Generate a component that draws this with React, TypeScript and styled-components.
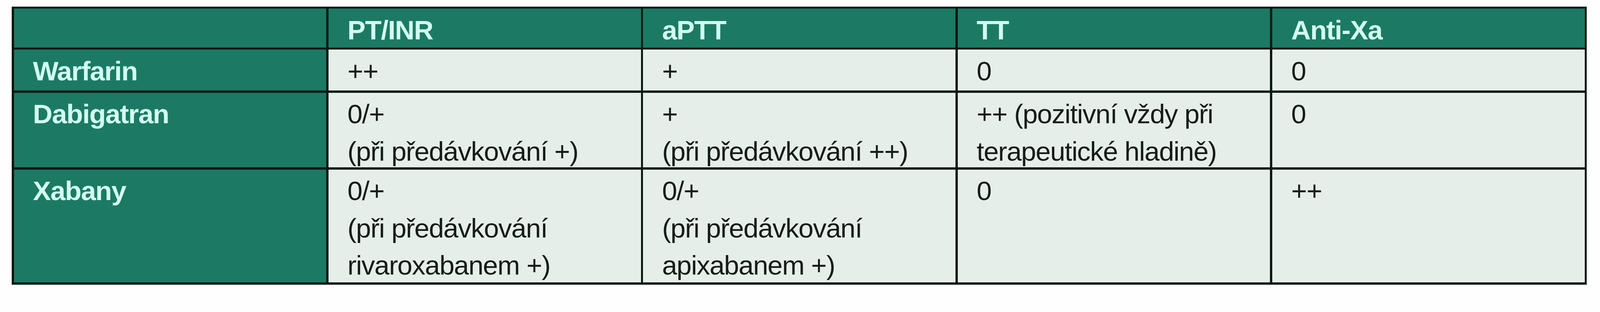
import React from 'react';
import styled, {createGlobalStyle} from 'styled-components';

// The capture is 4372px wide; sizes are given in those pixels and scaled to the real viewport width.
const px = (n: number) => `calc(${n} * 100vw / 4372)`;

const GlobalStyle = createGlobalStyle`
  html, body {
    margin: 0;
    padding: 0;
    background: #fdfefd;
    overflow: hidden;
  }
  body {
    font-family: "Liberation Sans", Arial, sans-serif;
  }
`;

const Page = styled.div`
  padding: ${px(18)} 0 0 ${px(32)};
`;

// The grid's own background shows through the gaps as the cell rules.
const Grid = styled.div`
  display: grid;
  width: ${px(4304)};
  box-sizing: border-box;
  grid-template-columns: repeat(5, minmax(0, 1fr));
  grid-template-rows: ${px(106)} ${px(112)} ${px(204)} ${px(309)};
  gap: ${px(6)};
  padding: ${px(6)};
  background: #0b1914;
`;

const Cell = styled.div<{$head?: boolean}>`
  box-sizing: border-box;
  padding: ${px(8)} ${px(30)} 0 ${px(52)};
  font-size: ${px(74)};
  line-height: ${px(102)};
  letter-spacing: ${px(-1.5)};
  background: ${({$head}) => ($head ? '#1c7a64' : '#e6eee9')};
  color: ${({$head}) => ($head ? '#d2fdf1' : '#161c19')};
  font-weight: ${({$head}) => ($head ? 700 : 400)};
  overflow: hidden;
`;

const Line = styled.div`
  white-space: nowrap;
`;

const columns = ['PT/INR', 'aPTT', 'TT', 'Anti-Xa'];

const rows: {drug: string; values: string[][]}[] = [
  {drug: 'Warfarin', values: [['++'], ['+'], ['0'], ['0']]},
  {
    drug: 'Dabigatran',
    values: [
      ['0/+', '(při předávkování +)'],
      ['+', '(při předávkování ++)'],
      ['++ (pozitivní vždy při', 'terapeutické hladině)'],
      ['0'],
    ],
  },
  {
    drug: 'Xabany',
    values: [
      ['0/+', '(při předávkování', 'rivaroxabanem +)'],
      ['0/+', '(při předávkování', 'apixabanem +)'],
      ['0'],
      ['++'],
    ],
  },
];

export default function App() {
  return (
    <Page>
      <GlobalStyle />
      <Grid>
        <Cell $head />
        {columns.map((c) => (
          <Cell $head key={c}>
            <Line>{c}</Line>
          </Cell>
        ))}
        {rows.map((r) => (
          <React.Fragment key={r.drug}>
            <Cell $head>
              <Line>{r.drug}</Line>
            </Cell>
            {r.values.map((lines, i) => (
              <Cell key={i}>
                {lines.map((l) => (
                  <Line key={l}>{l}</Line>
                ))}
              </Cell>
            ))}
          </React.Fragment>
        ))}
      </Grid>
    </Page>
  );
}
